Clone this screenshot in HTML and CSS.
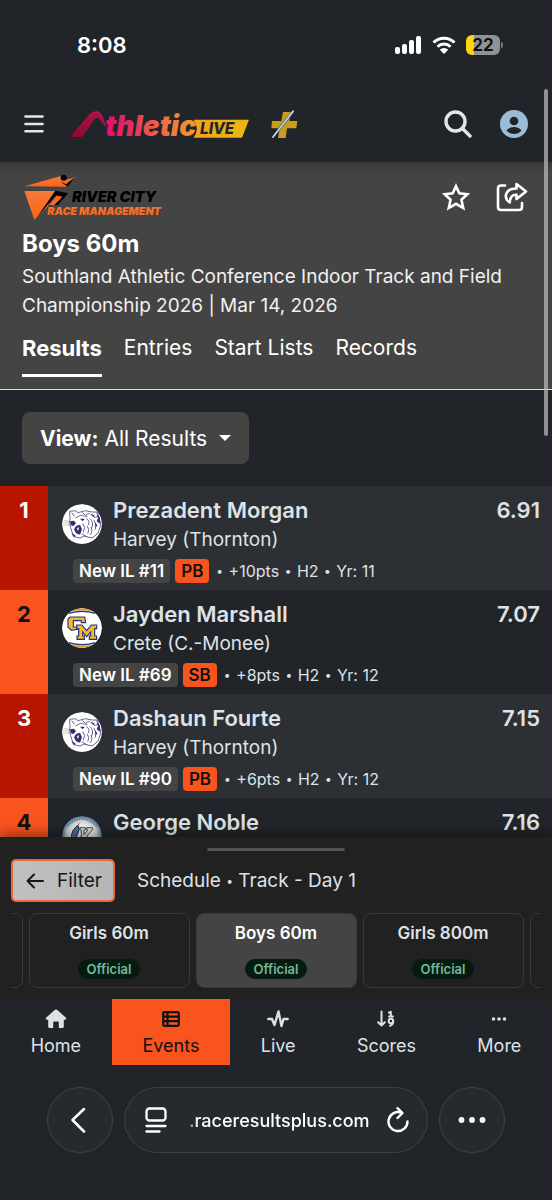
FILE: index.html
```html
<!DOCTYPE html>
<html lang="en">
<head>
<meta charset="utf-8">
<meta name="viewport" content="width=device-width, initial-scale=1">
<title>Boys 60m - AthleticLIVE</title>
<link rel="stylesheet" href="styles.css">
</head>
<body>
<svg class="defs" aria-hidden="true">
  <symbol id="wildcat" viewBox="0 0 120 120">
    <circle cx="60" cy="60" r="60" fill="#fff"/>
    <g fill="none" stroke="#4d4285" stroke-width="2.500" stroke-linecap="round" stroke-linejoin="round">
      <path d="M24 44 23 22 40 20 48 26 70 20 90 24 106 24 112 42 116 64 108 88 90 102 66 96 54 102 36 98 30 84 26 70 22 58z"/>
      <path d="M30 27 36 36M62 26 70 34 82 28M88 30 96 40 108 38M74 44Q84 50 80 62M84 44Q96 54 90 70M96 48Q106 60 100 76M76 66Q84 76 78 88M88 70Q94 80 86 92"/>
      <path d="M60 90 74 98M62 60 68 70 64 84"/>
      <path d="M4 54 24 58M4 62 24 63M6 48 24 54" stroke="#aaa" stroke-width="2"/>
    </g>
    <path d="M24 52 36 50 42 58 34 66 26 64zM42 66 54 62 60 76 54 92 42 88 36 76zM54 44 68 44 62 52zM102 24 112 40 116 60 104 52 108 42zM84 30 98 34 94 38zM28 86 42 96 34 98zM98 54 106 64 102 70z" fill="#37286f"/>
    <path d="M44 72 48 82 52 70z" fill="#eae6f4"/>
    <path d="M40 42 56 34 76 38" fill="none" stroke="#777" stroke-width="3"/>
  </symbol>
</svg>

<div class="status">
  <span class="clock">8:08</span>
  <div class="status-icons">
    <svg width="28" height="20" viewBox="0 0 28 20" fill="#fff"><rect x="1" y="12" width="5" height="7" rx="2"/><rect x="8" y="9" width="5" height="10" rx="2"/><rect x="15" y="5" width="5" height="14" rx="2"/><rect x="22" y="1" width="5" height="18" rx="2"/></svg>
    <svg width="24" height="20" viewBox="0 0 24 20" fill="none" stroke="#fff" stroke-width="3"><path d="M1.500 7.500a15 15 0 0 1 21 0M5.500 11.700a9.300 9.300 0 0 1 13 0"/><path d="M12 19 7.800 14.800a6 6 0 0 1 8.400 0z" fill="#fff" stroke="none"/></svg>
    <span class="battery"><b>22</b></span>
  </div>
</div>

<header class="appbar">
  <button class="icon-btn" aria-label="Menu"><svg width="20" height="18" viewBox="0 0 20 18" stroke="#e3e6ea" stroke-width="2.600" stroke-linecap="round"><path d="M1.500 1.500h17M1.500 9h17M1.500 16.300h17"/></svg></button>
  <a class="brand" href="#" aria-label="AthleticLIVE">
    <svg width="181" height="28" viewBox="207 58 543 84">
      <defs>
        <linearGradient id="ga" x1="0" y1="1" x2="1" y2="0"><stop offset="0" stop-color="#96062c"/><stop offset="1" stop-color="#c2154f"/></linearGradient>
        <linearGradient id="gt" gradientUnits="userSpaceOnUse" x1="318" y1="0" x2="585" y2="0"><stop offset="0" stop-color="#e0126b"/><stop offset=".25" stop-color="#e32a62"/><stop offset=".6" stop-color="#ef6845"/><stop offset="1" stop-color="#f39a29"/></linearGradient>
        <linearGradient id="gl" x1="0" y1="0" x2="1" y2="0"><stop offset="0" stop-color="#f4a021"/><stop offset="1" stop-color="#e9b90d"/></linearGradient>
      </defs>
      <path d="M210 139 268 72Q280 60 293 62Q303 64 309 80L320 112 307 98 297 84Q290 76 284 86L246 139z" fill="url(#ga)"/>
      <path d="M226 139 279 76Q289 67 297 74L309 98" fill="none" stroke="#212529" stroke-width="1.500"/>
      <path d="M239 138 284 82" stroke="#212529" stroke-width="1.500"/>
      <path d="M581 87H747L726 141H581Q600 114 581 87z" fill="url(#gl)"/>
      <text class="logo-athletic" x="315" y="137" fill="url(#gt)">thletic</text>
      <text class="logo-live" x="600" y="130">LIVE</text>
    </svg>
  </a>
  <svg class="plus" width="28" height="30" viewBox="810 60 84 90"><path d="M849 69H872L868 96H892L889 118H861L857 147H834L839 118H814L816 96H844z" fill="#c99c1e"/><path d="m818 145 62-79" stroke="#222529" stroke-width="8"/><path d="m819 144 60-77" stroke="#b7d3e8" stroke-width="6" stroke-linecap="round"/></svg>
  <div class="appbar-actions">
    <button class="icon-btn" aria-label="Search"><svg width="28" height="28" viewBox="0 0 28 28" fill="none" stroke="#e3e6ea" stroke-width="3.400" stroke-linecap="round"><circle cx="11.500" cy="11.500" r="9.500"/><path d="m18.500 18.500 7.500 7.500"/></svg></button>
    <button class="icon-btn" aria-label="Account"><svg width="28" height="28" viewBox="0 0 28 28"><circle cx="14" cy="14" r="14" fill="#9abdd6"/><circle cx="14" cy="11" r="4.300" fill="#212529"/><path d="M6.500 20.500Q9 17 14 17T21.500 20.500Q18.500 24 14 24T6.500 20.500z" fill="#212529"/></svg></button>
  </div>
</header>

<section class="event">
  <div class="event-top">
    <svg width="142" height="48" viewBox="66 250 426 144" role="img" aria-label="River City Race Management">
      <defs><linearGradient id="gr" x1="0" y1="0" x2="0" y2="1"><stop offset="0" stop-color="#f47a3e"/><stop offset="1" stop-color="#fb6413"/></linearGradient></defs>
      <path d="M74 290 180 260 200 270 226 262 200 291z" fill="url(#gr)"/>
      <circle cx="191" cy="264" r="9"/><path d="m180 275 18 9 27-22-22 29z"/>
      <path d="M73 304H166L144 350 103 390z" fill="url(#gr)"/>
      <path d="M166 303 204 311 173 347 158 344 180 318 168 317 110 384z"/>
      <path d="m170 318 18 3-26 26-14-2z" fill="#f66b25"/>
      <text class="river" x="216" y="338">RIVER CITY</text>
      <text class="race" x="142" y="375" fill="url(#gr)">RACE MANAGEMENT</text>
    </svg>
    <div class="event-actions">
      <button class="icon-btn" aria-label="Favorite"><svg width="28" height="28" viewBox="0 0 28 28" fill="none" stroke="#fff" stroke-width="2.600" stroke-linejoin="miter"><path d="M14 3.200 17.300 10.400 25.400 11.200 19.400 16.700 21.200 25 14 20.800 6.800 25 8.600 16.700 2.600 11.200 10.700 10.400z"/></svg></button>
      <button class="icon-btn" aria-label="Share"><svg width="32" height="30" viewBox="0 0 32 30" fill="none" stroke="#fff" stroke-width="2.600" stroke-linecap="round" stroke-linejoin="round"><path d="M9 3.500H5Q2 3.500 2 6.500V25Q2 28 5 28H23Q26 28 26 25V21"/><path d="M20.500 2 30 9.500 20.500 17V12.800Q14 12.500 13.800 20.500 9.500 18 9.800 13.500 11 6.500 20.500 6.500z"/></svg></button>
    </div>
  </div>
  <h1>Boys 60m</h1>
  <p class="meet">Southland Athletic Conference Indoor Track and Field Championship 2026 | Mar 14, 2026</p>
  <nav class="tabs">
    <a class="active" href="#">Results</a><a href="#">Entries</a><a href="#">Start Lists</a><a href="#">Records</a>
  </nav>
</section>

<div class="toolbar">
  <button class="view" aria-haspopup="listbox"><b>View:</b> All Results <i class="caret"></i></button>
</div>

<ol class="results">
  <li>
    <span class="rank">1</span>
    <div class="entry">
      <svg class="avatar"><use href="#wildcat"/></svg>
      <div class="who"><strong>Prezadent Morgan</strong><span>Harvey (Thornton)</span></div>
      <span class="mark">6.91</span>
      <div class="meta"><b class="tag">New IL #11</b><b class="tag best">PB</b><span><i class="dot">•</i> +10pts <i class="dot">•</i> H2 <i class="dot">•</i> Yr: 11</span></div>
    </div>
  </li>
  <li>
    <span class="rank">2</span>
    <div class="entry">
      <svg class="avatar" viewBox="0 0 120 120">
        <circle cx="60" cy="60" r="60" fill="#fff"/>
        <path d="M26 11A60 60 0 0 1 94 11Q60 4 26 11zM26 109A60 60 0 0 0 94 109Q60 116 26 109z" fill="#d89c2b"/>
        <path d="M20 16Q60 4 100 16M20 104Q60 116 100 104" fill="none" stroke="#24307c" stroke-width="4"/>
        <path d="M24 27H68L71 44H58V38H34V57H46V64L28 67 18 57V34z" fill="#f5b82e" stroke="#26347d" stroke-width="3.500"/>
        <path d="M44 51H60L74 68 88 51H104V62H98V84H104V94H82V84H86V72L74 86 62 72V84H67V94H45V84H50V62H44z" fill="#f5b82e" stroke="#26347d" stroke-width="3.500"/>
      </svg>
      <div class="who"><strong>Jayden Marshall</strong><span>Crete (C.-Monee)</span></div>
      <span class="mark">7.07</span>
      <div class="meta"><b class="tag">New IL #69</b><b class="tag best">SB</b><span><i class="dot">•</i> +8pts <i class="dot">•</i> H2 <i class="dot">•</i> Yr: 12</span></div>
    </div>
  </li>
  <li>
    <span class="rank">3</span>
    <div class="entry">
      <svg class="avatar"><use href="#wildcat"/></svg>
      <div class="who"><strong>Dashaun Fourte</strong><span>Harvey (Thornton)</span></div>
      <span class="mark">7.15</span>
      <div class="meta"><b class="tag">New IL #90</b><b class="tag best">PB</b><span><i class="dot">•</i> +6pts <i class="dot">•</i> H2 <i class="dot">•</i> Yr: 12</span></div>
    </div>
  </li>
  <li>
    <span class="rank">4</span>
    <div class="entry">
      <svg class="avatar" viewBox="0 0 120 120">
        <defs><radialGradient id="gn"><stop offset=".55" stop-color="#eef0f0"/><stop offset=".78" stop-color="#c9ccc9"/><stop offset="1" stop-color="#4f7193"/></radialGradient></defs>
        <circle cx="60" cy="60" r="60" fill="url(#gn)"/>
        <path d="M16 30Q60-14 104 30" fill="none" stroke="#5f81a3" stroke-width="7" stroke-dasharray="5 3"/>
        <path d="M28 66Q28 40 48 28L52 40 42 66z" fill="#4c6fa9" stroke="#202b3c" stroke-width="3"/><path d="m46 30 6-8" stroke="#b7492f" stroke-width="3"/>
        <path d="M54 35H70V42H66V56L78 42H74V35H91V42L76 58V70H54V63H58V42H54z" fill="#e0e0dc" stroke="#444d55" stroke-width="3"/>
      </svg>
      <div class="who"><strong>George Noble</strong></div>
      <span class="mark">7.16</span>
    </div>
  </li>
</ol>

<section class="schedule">
  <div class="handle"></div>
  <div class="schedule-head">
    <button class="filter"><svg width="18" height="16" viewBox="0 0 18 16" fill="none" stroke="#161616" stroke-width="2" stroke-linecap="round" stroke-linejoin="round"><path d="M17 8H1.500M8 1.500 1.500 8 8 14.500"/></svg>Filter</button>
    <span>Schedule <i class="dot">•</i> Track - Day 1</span>
  </div>
  <div class="cards">
    <a class="card" href="#" aria-label="Previous event"></a>
    <a class="card" href="#"><b>Girls 60m</b><span>Official</span></a>
    <a class="card current" href="#"><b>Boys 60m</b><span>Official</span></a>
    <a class="card" href="#"><b>Girls 800m</b><span>Official</span></a>
    <a class="card" href="#" aria-label="Next event"></a>
  </div>
</section>

<nav class="tabbar">
  <a href="#"><svg width="22" height="20" viewBox="0 0 22 20"><path d="M11 .5Q11.700.5 12.300 1L21 8.800Q21.800 10.500 20 10.800H18.800V17.500Q18.800 19 17.300 19H13.800V13.500Q13.800 12.500 12.800 12.500H9.200Q8.200 12.500 8.200 13.500V19H4.700Q3.200 19 3.200 17.500V10.800H2Q.2 10.500 1 8.800L9.700 1Q10.300.5 11 .5z" fill="currentColor"/></svg>Home</a>
  <a class="active" href="#"><svg width="18" height="20" viewBox="0 0 18 20" fill="none" stroke="#111" stroke-width="2.200"><rect x="1.200" y="3.200" width="15.600" height="13.600" rx="1.500"/><path d="M1 7.700h16M1 12.200h16M5.500 3v14"/></svg>Events</a>
  <a href="#"><svg width="22" height="20" viewBox="0 0 22 20" fill="none" stroke="currentColor" stroke-width="2.400" stroke-linecap="round" stroke-linejoin="round"><path d="M1.300 10H5L7.500 16 11.500 2.500 14.500 17 16.500 10H20.700"/></svg>Live</a>
  <a href="#"><svg width="18" height="20" viewBox="0 0 18 20" fill="none" stroke="currentColor" stroke-width="2" stroke-linecap="round" stroke-linejoin="round"><path d="M4.500 2.500V16.500M1.200 13.200 4.500 16.500 7.800 13.200M12 3.700 13.800 2.700V7.500M12 7.500H16"/><circle cx="13.900" cy="12" r="2.200"/><path d="M16.200 12Q16.500 15.500 13 16.800"/></svg>Scores</a>
  <a href="#"><svg width="16" height="20" viewBox="0 0 16 20" fill="currentColor"><circle cx="2.500" cy="10" r="1.800"/><circle cx="8" cy="10" r="1.800"/><circle cx="13.500" cy="10" r="1.800"/></svg>More</a>
</nav>

<div class="browser">
  <button class="round" aria-label="Back"><svg width="18" height="28" viewBox="0 0 18 28" fill="none" stroke="#fff" stroke-width="2.500" stroke-linecap="round" stroke-linejoin="round"><path d="M13 3 1.500 14 13 25.500"/></svg></button>
  <div class="address">
    <button class="icon-btn" aria-label="Page menu"><svg width="22" height="26" viewBox="0 0 22 26" fill="none" stroke="#fff" stroke-width="2.300" stroke-linecap="round"><rect x="1.500" y="1.500" width="19" height="12" rx="3"/><path d="M1.500 19h19M1.500 24.500h13"/></svg></button>
    <input type="text" aria-label="Address" value=".raceresultsplus.com">
    <button class="icon-btn" aria-label="Reload"><svg width="22" height="28" viewBox="0 0 22 28" fill="none" stroke="#fff" stroke-width="2.400" stroke-linecap="round" stroke-linejoin="round"><path d="M20.500 15.500A9.500 9.500 0 1 1 14.500 6.700M10.500 2.200 15.500 7 10.500 12"/></svg></button>
  </div>
  <button class="round" aria-label="More options"><svg width="28" height="8" viewBox="0 0 28 8" fill="#fff"><circle cx="3.500" cy="4" r="2.900"/><circle cx="14" cy="4" r="2.900"/><circle cx="24.500" cy="4" r="2.900"/></svg></button>
</div>
<div class="scroll-thumb"></div>
</body>
</html>
```
FILE: styles.css
```css
* { box-sizing: border-box; }

body {
  margin: 0;
  height: 100vh;
  display: flex;
  flex-direction: column;
  position: relative;
  overflow: hidden;
  background: #212529;
  color: #dee2e6;
  font-family: Inter, "Liberation Sans", sans-serif;
  font-size: 19px;
}

a { color: inherit; text-decoration: none; }
button { font: inherit; color: inherit; cursor: pointer; }
svg { display: block; flex: none; }
.defs { position: absolute; width: 0; height: 0; }
.icon-btn { display: block; padding: 0; border: 0; background: none; }
.dot { font-size: 12px; line-height: 12px; font-style: normal; vertical-align: 2px; }

/* Device status */
.status {
  flex: none;
  height: 90px;
  padding: 0 52px 0 77px;
  display: flex;
  align-items: center;
  justify-content: space-between;
  color: #fff;
}
.clock { font-size: 22px; font-weight: 600; }
.status-icons { display: flex; align-items: center; gap: 10px; }
.battery {
  position: relative;
  width: 34px;
  height: 20px;
  border-radius: 6px;
  background: linear-gradient(90deg, #ffd60a 8px, #919295 8px);
  color: #111;
  font-size: 17px;
  line-height: 20px;
  text-align: center;
}
.battery::after {
  content: "";
  position: absolute;
  left: 35px;
  top: 7px;
  width: 2px;
  height: 6px;
  border-radius: 0 2px 2px 0;
  background: #77797c;
}

/* App bar */
.appbar {
  flex: none;
  height: 72px;
  padding: 0 24px 4px;
  display: flex;
  align-items: center;
}
.brand { margin-left: 25px; }
.brand svg { overflow: visible; }
.plus { margin-left: 20px; }
.appbar-actions { margin-left: auto; display: flex; gap: 28px; }
.logo-athletic { font: italic 900 84px Inter, sans-serif; }
.logo-live { font: italic 800 46px Inter, sans-serif; fill: #212529; }

/* Event heading */
.event {
  flex: none;
  padding: 11px 22px 12px;
  background: linear-gradient(#383838, #444 12px);
  border-bottom: 1px solid #dee2e6;
  color: #fff;
}
.event-top { display: flex; justify-content: space-between; }
.event-actions { display: flex; align-items: center; gap: 26px; margin-right: 2px; }
.river { font: italic 900 44px Inter, sans-serif; }
.race { font: italic 900 32px Inter, sans-serif; }
h1 { margin: 8px 0 3px; font-size: 24px; line-height: 30px; font-weight: 700; }
.meet { margin: 0; line-height: 29px; color: #f1f1f1; }
.tabs { display: flex; gap: 22px; margin-top: 14px; font-size: 21px; line-height: 28px; }
.tabs a { padding-bottom: 12px; border-bottom: 3px solid transparent; }
.tabs .active { font-size: 22px; font-weight: 700; border-color: #fff; }

.toolbar { flex: none; padding: 22px; }
.view {
  height: 52px;
  padding: 0 18px;
  display: flex;
  align-items: center;
  gap: 6px;
  border: 0;
  border-radius: 8px;
  background: #444;
  color: #fff;
  font-size: 21px;
}
.caret { margin-left: 6px; border: 6px solid transparent; border-top-color: #fff; border-bottom: 0; }

/* Results */
.results { flex: 1; min-height: 0; margin: 0; padding: 0; overflow: hidden; list-style: none; }
.results li { display: flex; min-height: 104px; background: #2c3034; }
.results li:nth-child(even) { background: #212529; }
.rank {
  flex: none;
  width: 48px;
  padding-top: 10px;
  background: #b71500;
  color: #fff;
  font-size: 22px;
  line-height: 28px;
  font-weight: 700;
  text-align: center;
}
.results li:nth-child(even) .rank { background: #f9541e; color: #111; }
.entry {
  flex: 1;
  min-width: 0;
  padding: 10px 12px 7px 14px;
  display: grid;
  grid-template-columns: 40px 1fr auto;
  grid-template-rows: auto auto;
  column-gap: 11px;
  align-content: start;
}
.avatar { width: 40px; height: 40px; margin-top: 8px; border-radius: 50%; }
.who strong { display: block; font-size: 22px; line-height: 28px; font-weight: 600; }
.who span { display: block; font-size: 19px; line-height: 32px; }
.mark { font-size: 22px; line-height: 28px; font-weight: 600; }
.meta {
  grid-column: 1 / -1;
  height: 24px;
  margin: 3px 0 0 11px;
  display: flex;
  align-items: center;
  gap: 5px;
  font-size: 16px;
  line-height: 24px;
}
.meta > span { margin-left: 1px; }
.meta .dot { margin: 0 1px; }
.tag { padding: 0 6px; border-radius: 4px; background: #444; color: #fff; font-size: 17px; font-weight: 600; }
.tag.best { background: #f9541e; color: #111; }

/* Schedule drawer */
.schedule {
  flex: none;
  position: relative;
  padding: 11px;
  background: #212121;
  box-shadow: 0 -3px 12px rgba(0, 0, 0, .45);
}
.handle { width: 138px; height: 3px; margin: 0 auto 8px; border-radius: 2px; background: #555; }
.schedule-head { display: flex; align-items: center; gap: 22px; }
.filter {
  height: 43px;
  padding: 0 11px 0 13px;
  display: flex;
  align-items: center;
  gap: 13px;
  border: 2px solid #e8683d;
  border-radius: 5px;
  background: linear-gradient(90deg, #c0c0c0, #b5b5b5);
  color: #161616;
}
.cards {
  display: flex;
  justify-content: center;
  gap: 6px;
  margin-top: 11px;
  overflow: hidden;
}
.card {
  flex: none;
  width: 161px;
  height: 75px;
  padding: 8px 0;
  display: flex;
  flex-direction: column;
  align-items: center;
  justify-content: space-between;
  border: 1px solid #383838;
  border-radius: 8px;
  font-size: 17px;
  line-height: 22px;
}
.card b { font-weight: 600; }
.card span {
  padding: 0 9px;
  border-radius: 10px;
  background: #051b11;
  color: #75b798;
  font-size: 13px;
  line-height: 20px;
  font-weight: 600;
}
.card.current { background: #444; color: #fff; }

/* App tabs */
.tabbar { flex: none; display: flex; position: relative; background: #212529; }
.tabbar a {
  flex: 1 1 auto;
  height: 66px;
  padding-top: 10px;
  display: flex;
  flex-direction: column;
  align-items: center;
  gap: 5px;
  font-size: 18px;
  line-height: 24px;
}
.tabbar .active { background: #f9541e; color: #111; }

/* Browser controls */
.browser { flex: none; padding: 22px 47px 47px; display: flex; gap: 11px; }
.round, .address {
  height: 66px;
  border: 1px solid #3d4149;
  border-radius: 33px;
  background: #252a2e;
}
.round { flex: none; width: 66px; padding: 0; display: grid; place-items: center; }
.address { flex: 1; min-width: 0; padding: 0 18px 0 20px; display: flex; align-items: center; gap: 18px; }
.address input {
  flex: 1;
  min-width: 0;
  padding: 0 0 0 4px;
  border: 0;
  outline: 0;
  background: none;
  color: #fff;
  font: 500 18px Inter, sans-serif;
  mask-image: linear-gradient(90deg, rgba(0, 0, 0, .3) 4px, #000 12px);
}

.scroll-thumb {
  position: absolute;
  right: 4px;
  top: 89px;
  width: 4px;
  height: 347px;
  border-radius: 2px;
  background: rgba(190, 190, 192, .7);
}
```
